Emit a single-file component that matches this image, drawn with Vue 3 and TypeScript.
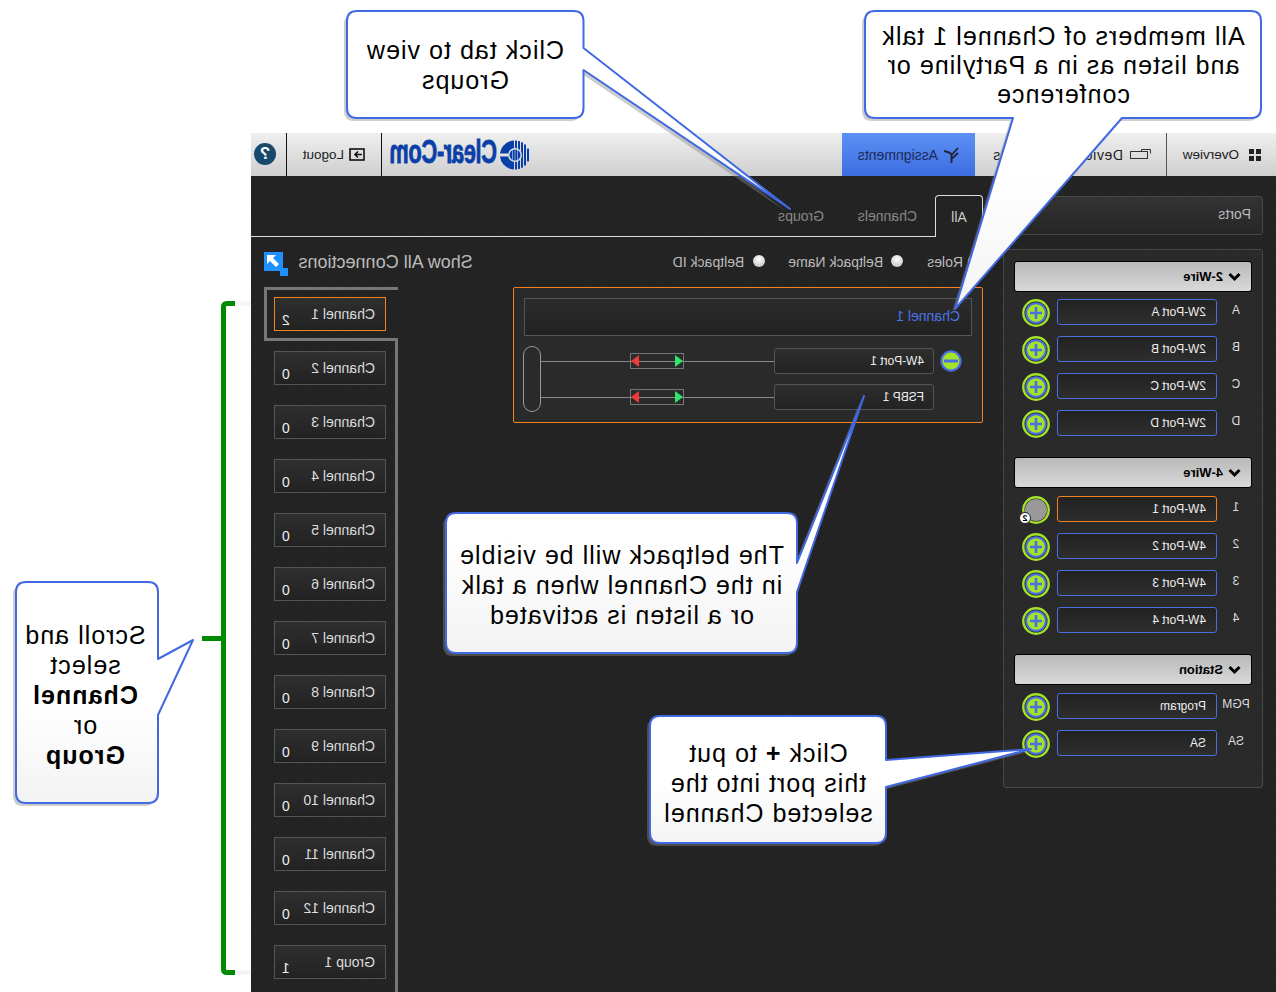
<script setup lang="ts">
interface Port { label: string; name: string; active?: boolean }
interface Group { title: string; ports: Port[] }
interface Seg { t: string; b?: boolean }
interface Callout { left: number; top: number; w: number; h: number; lines: Seg[][]; lh?: number }

const groups: Group[] = [
  { title: '2-Wire', ports: [
    { label: 'A', name: '2W-Port A' }, { label: 'B', name: '2W-Port B' },
    { label: 'C', name: '2W-Port C' }, { label: 'D', name: '2W-Port D' } ] },
  { title: '4-Wire', ports: [
    { label: '1', name: '4W-Port 1', active: true }, { label: '2', name: '4W-Port 2' },
    { label: '3', name: '4W-Port 3' }, { label: '4', name: '4W-Port 4' } ] },
  { title: 'Station', ports: [
    { label: 'PGM', name: 'Program' }, { label: 'SA', name: 'SA' } ] },
]

const channels = [
  ...Array.from({ length: 11 }, (_, i) => ({ name: `Channel ${i + 2}`, count: 0 })),
  { name: 'Group 1', count: 1 },
]

const stripes = [1, 4, 7, 10, 13, 16]
function half(s: number): number {
  return Math.sqrt(Math.max(0, 210 - (s + 1 - 15) * (s + 1 - 15)))
}

const callouts: Callout[] = [
  { left: 346, top: 11, w: 238, h: 107, lines: [[{ t: 'Click tab to view' }], [{ t: 'Groups' }]] },
  { left: 864, top: 12, w: 398, h: 107, lh: 29, lines: [[{ t: 'All members of Channel 1 talk' }], [{ t: 'and listen as in a Partyline or' }], [{ t: 'conference' }]] },
  { left: 446, top: 515, w: 351, h: 140, lines: [[{ t: 'The beltpack will be visible' }], [{ t: 'in the Channel when a talk' }], [{ t: 'or a listen is activated' }]] },
  { left: 650, top: 719, w: 236, h: 127, lines: [[{ t: 'Click ' }, { t: '+', b: true }, { t: ' to put' }], [{ t: 'this port into the' }], [{ t: 'selected Channel' }]] },
  { left: 14, top: 584, w: 142, h: 221, lines: [[{ t: 'Scroll and' }], [{ t: 'select' }], [{ t: 'Channel', b: true }], [{ t: 'or' }], [{ t: 'Group', b: true }]] },
]

function rr(x: number, y: number, w: number, h: number, r: number, tail: string, side: 'r' | 'b'): string {
  const x2 = x + w
  const y2 = y + h
  const right = side === 'r' ? tail : ''
  const bottom = side === 'b' ? tail : ''
  return `M${x + r} ${y}H${x2 - r}Q${x2} ${y} ${x2} ${y + r}${right}V${y2 - r}Q${x2} ${y2} ${x2 - r} ${y2}${bottom}H${x + r}Q${x} ${y2} ${x} ${y2 - r}V${y + r}Q${x} ${y} ${x + r} ${y}Z`
}

const shapes: string[] = [
  rr(347, 11, 236.5, 107, 10, 'V48L790 209L583.5 70', 'r'),
  rr(865, 11, 396, 107, 10, 'H1122L955 309L1013 118', 'b'),
  rr(446, 513, 351, 140, 10, 'V563L864 396L797 592', 'r'),
  rr(650, 716, 236, 127, 10, 'V760L1031 749L886 787', 'r'),
  rr(16, 582, 142, 221, 10, 'V659L193 640L158 715', 'r'),
]
</script>

<template>
  <div class="stage">
    <div class="mirror">
      <div class="app">
        <header class="topbar">
          <div class="nav nav-first">
            <svg class="i-grid" width="12" height="12" viewBox="0 0 12 12"><rect width="5" height="5" /><rect x="7" width="5" height="5" /><rect y="7" width="5" height="5" /><rect x="7" y="7" width="5" height="5" /></svg>
            <span>Overview</span>
          </div>
          <div class="nav nav-dev">
            <svg width="21" height="11" viewBox="0 0 21 11" fill="none" stroke="#333"><path d="M0.500 4.500V0.500H9.500V2.500" /><rect x="3.500" y="2.500" width="17" height="7" /></svg>
            <span>Device Capabilities</span>
          </div>
          <div class="nav nav-on">
            <svg width="15" height="16" viewBox="0 0 15 16" fill="none" stroke="#223" stroke-width="1.800"><path d="M7.500 16V7Q10 5 15 4M7 7.500L1 1M7 11.500L1 6" /></svg>
            <span>Assignments</span>
          </div>
          <div class="logo">
            <svg width="30" height="30" viewBox="0 0 30 30">
              <g fill="#0a3fa8">
                <rect v-for="s in stripes" :key="s" :x="s" :y="15 - half(s)" width="2" :height="2 * half(s)" />
                <path d="M18 0.700A14.500 14.500 0 0 1 18 29.300Z" />
              </g>
              <rect x="22" y="13.500" width="8" height="3" fill="#e2e2e2" />
              <circle cx="15" cy="15" r="7" fill="#e2e2e2" />
              <circle cx="15" cy="15" r="5.500" fill="#0a3fa8" />
              <path d="M12.500 10V20M15 9.500V20.500M17.500 10V20" stroke="#9db4e0" stroke-width="0.800" />
            </svg>
            <span class="logo-word"><span>Clear-Com</span></span>
          </div>
          <div class="logout">
            <svg width="16" height="13" viewBox="0 0 16 13" fill="none" stroke="#111" stroke-width="1.600"><rect x="1" y="1" width="14" height="11" /><path d="M3 6.500H10M7 3.500L10 6.500L7 9.500" /></svg>
            <span>Logout</span>
          </div>
          <div class="help"><span>?</span></div>
        </header>

        <div class="workspace">
          <aside class="ports">
            <div class="panel ports-head">Ports</div>
            <div class="panel ports-body">
              <section v-for="g in groups" :key="g.title" class="pgroup">
                <div class="pgroup-head">
                  <svg width="13" height="10" viewBox="0 0 13 10" fill="none" stroke="#000" stroke-width="3"><path d="M1.500 2L6.500 7L11.500 2" /></svg>
                  <span>{{ g.title }}</span>
                </div>
                <div v-for="p in g.ports" :key="p.label" class="prow">
                  <span class="plabel">{{ p.label }}</span>
                  <span class="pbox" :class="{ 'pbox-on': p.active }">{{ p.name }}</span>
                  <span class="padd">
                    <svg width="28" height="28" viewBox="0 0 28 28">
                      <circle cx="14" cy="14" r="12.700" fill="#222" stroke="#a5e22a" stroke-width="2.400" />
                      <template v-if="p.active">
                        <circle cx="14" cy="14" r="11" fill="#999" />
                      </template>
                      <template v-else>
                        <circle cx="14" cy="14" r="9.800" fill="#a5e22a" stroke="#4a6fe0" stroke-width="2" />
                        <path d="M14 8V20M8 14H20" stroke="#4a6fe0" stroke-width="2.600" />
                      </template>
                    </svg>
                    <span v-if="p.active" class="pbadge">2</span>
                  </span>
                </div>
              </section>
            </div>
          </aside>

          <main class="main">
            <div class="tabs">
              <div class="tab tab-on">All</div>
              <div class="tab tab-ch">Channels</div>
              <div class="tab tab-gr">Groups</div>
              <div class="tab-rule"></div>
            </div>

            <div class="options">
              <i class="radio radio-first"></i><span class="opt opt-roles">Roles</span>
              <i class="radio"></i><span class="opt opt-name">Beltpack Name</span>
              <i class="radio"></i><span class="opt opt-id">Beltpack ID</span>
              <span class="showall">Show All Connections</span>
              <span class="showicon">
                <svg width="24" height="24" viewBox="0 0 24 24">
                  <rect x="5" y="0" width="19" height="19" fill="#1e90ff" />
                  <rect x="0" y="16" width="8" height="8" fill="#1e90ff" />
                  <path d="M21 3H12L15 6L9 12L12 15L18 9L21 12Z" fill="#fff" />
                </svg>
              </span>
            </div>

            <div class="lower">
              <div class="chan">
                <div class="chan-head">Channel 1</div>
                <div class="conn">
                  <div class="conn-rows">
                    <div class="conn-row">
                      <span class="minus-slot">
                        <svg width="22" height="22" viewBox="0 0 22 22">
                          <circle cx="11" cy="11" r="9.600" fill="#a5e22a" stroke="#4a6fe0" stroke-width="2.200" />
                          <path d="M4 11H18" stroke="#4a6fe0" stroke-width="3" />
                        </svg>
                      </span>
                      <span class="cbox">4W-Port 1</span>
                      <span class="wire"><span class="arrows"><i class="tri-g"></i><i class="tri-r"></i></span></span>
                    </div>
                    <div class="conn-row">
                      <span class="minus-slot"></span>
                      <span class="cbox">FSBP 1</span>
                      <span class="wire"><span class="arrows"><i class="tri-g"></i><i class="tri-r"></i></span></span>
                    </div>
                  </div>
                  <div class="pill"></div>
                </div>
              </div>

              <div class="list">
                <div class="list-sel">
                  <div class="lbox lbox-on"><span class="lname">Channel 1</span><span class="lcount">2</span></div>
                </div>
                <div class="list-rest">
                  <div v-for="c in channels" :key="c.name" class="lbox"><span class="lname">{{ c.name }}</span><span class="lcount">{{ c.count }}</span></div>
                </div>
              </div>
            </div>
          </main>
        </div>
      </div>
    </div>

    <svg class="overlay" width="1276" height="992" viewBox="0 0 1276 992">
      <defs>
        <linearGradient id="cfill" x1="0" y1="0" x2="0" y2="1">
          <stop offset="0" stop-color="#fff" />
          <stop offset="0.55" stop-color="#fff" />
          <stop offset="1" stop-color="#f3f3f3" />
        </linearGradient>
      </defs>
      <path d="M235 303.500H251M235 972.500H251" fill="none" stroke="#f4f4f4" stroke-width="4" />
      <path d="M235 303.500H227Q223.500 303.500 223.500 307V969Q223.500 972.500 227 972.500H235M202 638.500H223" fill="none" stroke="#008a00" stroke-width="5" />
      <path v-for="(d, i) in shapes" :key="i" :d="d" fill="#888" opacity="0.42" transform="translate(-3 3)" />
      <path v-for="(d, i) in shapes" :key="'s' + i" :d="d" fill="url(#cfill)" stroke="#4169e1" stroke-width="2" stroke-linejoin="round" />
    </svg>

    <div
      v-for="(c, i) in callouts"
      :key="i"
      class="ctext"
      :style="{ left: c.left + 'px', top: c.top + 'px', width: c.w + 'px', height: c.h + 'px', lineHeight: (c.lh || 30) + 'px' }"
    >
      <div v-for="(line, j) in c.lines" :key="j" class="cline"><template v-for="(s, k) in line" :key="k"><b v-if="s.b">{{ s.t }}</b><template v-else>{{ s.t }}</template></template></div>
    </div>
  </div>
</template>

<style scoped>
.stage {
  position: relative;
  width: 1276px;
  height: 992px;
  overflow: hidden;
  background: #fff;
  font-family: "Liberation Sans", Arial, sans-serif;
}
.mirror {
  width: 1276px;
  height: 992px;
  transform: scaleX(-1);
  padding-top: 133px;
  box-sizing: border-box;
}
.app {
  width: 1025px;
  height: 859px;
  overflow: hidden;
  background-color: #222;
  background-image: repeating-linear-gradient(45deg, rgba(255,255,255,0.02) 0 1px, transparent 1px 3px);
}
.topbar {
  height: 43px;
  display: flex;
  align-items: stretch;
  background: linear-gradient(#efefef, #cfcfcf);
  color: #222;
  font-size: 13.500px;
}
.nav {
  display: flex;
  align-items: center;
  gap: 10px;
  box-sizing: border-box;
  border-right: 1px solid #555;
}
.nav-first { width: 110px; padding-left: 15px; }
.i-grid { fill: #222; }
.nav-dev {
  width: 191px;
  padding-left: 15px;
  gap: 7px;
  border-right: 0;
  font-size: 14px;
  letter-spacing: 0.6px;
  white-space: nowrap;
}
.nav-on {
  width: 133px;
  padding-left: 16px;
  gap: 6px;
  background: linear-gradient(#5c90f3, #3c6de2);
  border: 0;
  color: #1c2a55;
  font-size: 14px;
}
.logo {
  width: 461px;
  padding-left: 312px;
  box-sizing: border-box;
  display: flex;
  align-items: center;
  gap: 3px;
  border-right: 1px solid #111;
}
.logo-word { width: 108px; display: block; white-space: nowrap; line-height: 30px; margin-top: 2px; }
.logo-word span {
  display: inline-block;
  font-size: 33px;
  font-weight: 700;
  color: #0a3fa8;
  -webkit-text-stroke: 0.8px #0a3fa8;
  transform: scaleX(0.66);
  transform-origin: 0 50%;
  letter-spacing: -0.5px;
}
.logout {
  width: 95px;
  padding-left: 16px;
  box-sizing: border-box;
  display: flex;
  align-items: center;
  gap: 5px;
  border-right: 1px solid #111;
  font-size: 13.500px;
}
.help {
  width: 22px;
  height: 22px;
  margin: 10px 0 0 10px;
  border-radius: 50%;
  background: #17496d;
  color: #fff;
  font-size: 17px;
  font-weight: 700;
  text-align: center;
  line-height: 22px;
}
.workspace { display: flex; align-items: flex-start; }
.ports { width: 260px; margin: 20px 20px 0 13px; flex: none; }
.panel {
  box-sizing: border-box;
  border: 1px solid #484848;
  border-radius: 3px;
}
.ports-head {
  height: 39px;
  padding: 9px 11px;
  font-size: 14px;
  color: #bbb;
  background: linear-gradient(#333, #262626);
}
.ports-body {
  height: 539px;
  margin-top: 14px;
  padding: 11px 10px;
  background: #2a2a2a;
}
.pgroup { margin-bottom: 21px; }
.pgroup-head {
  height: 31px;
  box-sizing: border-box;
  display: flex;
  align-items: center;
  gap: 5px;
  padding-left: 10px;
  border: 1px solid #000;
  border-radius: 3px;
  background: linear-gradient(#b9b9b9, #d9d9d9);
  color: #000;
  font-size: 13px;
  font-weight: 700;
}
.prow {
  display: flex;
  align-items: center;
  height: 26px;
  margin-top: 11px;
  position: relative;
}
.pgroup-head + .prow { margin-top: 8px; }
.pgroup:first-child .pgroup-head + .prow { margin-top: 7px; }
.plabel {
  width: 35px;
  padding-right: 3px;
  box-sizing: border-box;
  flex: none;
  text-align: center;
  font-size: 12px;
  color: #ddd;
  margin-top: -4px;
  white-space: nowrap;
}
.pbox {
  width: 160px;
  height: 26px;
  flex: none;
  box-sizing: border-box;
  border: 1px solid #4a6fe0;
  border-radius: 3px;
  padding-left: 10px;
  font-size: 12px;
  line-height: 24px;
  color: #eee;
  background: linear-gradient(#222, #2e2e2e);
}
.pbox-on { border-color: #f58220; }
.padd {
  position: relative;
  margin: 2px 0 0 7px;
  width: 28px;
  height: 28px;
  flex: none;
}
.pbadge {
  position: absolute;
  right: -3px;
  bottom: 0;
  width: 12px;
  height: 12px;
  border-radius: 50%;
  background: #fff;
  border: 1px solid #222;
  box-sizing: border-box;
  color: #000;
  font-size: 9px;
  font-weight: 700;
  line-height: 10px;
  text-align: center;
}
.main { width: 732px; flex: none; }
.tabs {
  height: 42px;
  margin-top: 19px;
  display: flex;
  align-items: stretch;
  font-size: 14px;
  color: #888;
}
.tab { box-sizing: border-box; padding-top: 13px; }
.tab-on {
  width: 48px;
  border: 1px solid #ddd;
  border-bottom: 0;
  border-radius: 4px 4px 0 0;
  color: #ccc;
  text-align: center;
}
.tab-ch { width: 111px; padding-left: 18px; border-bottom: 1px solid #ddd; }
.tab-gr { width: 80px; white-space: nowrap; border-bottom: 1px solid #ddd; }
.tab-rule { flex: 1; border-bottom: 1px solid #ddd; }
.options {
  height: 50px;
  display: flex;
  align-items: center;
  font-size: 14px;
  color: #bbb;
}
.radio {
  width: 12px;
  height: 12px;
  border-radius: 50%;
  background: radial-gradient(circle at 50% 35%, #fff, #bbb);
  flex: none;
  margin-top: -3px;
}
.radio-first { margin-left: 3px; }
.opt { white-space: nowrap; }
.opt-roles { margin-left: 5px; margin-right: 24px; }
.opt-name { margin-left: 8px; margin-right: 23px; }
.opt-id { margin-left: 9px; }
.showall { margin-left: 200px; font-size: 18px; white-space: nowrap; }
.showicon { margin-left: 11px; margin-top: 3px; line-height: 0; }
.lower { display: flex; align-items: flex-start; }
.chan {
  width: 470px;
  height: 136px;
  flex: none;
  box-sizing: border-box;
  border: 1px solid #f58220;
  border-radius: 2px;
  padding: 10px;
  background: #2a2a2a;
}
.chan-head {
  height: 38px;
  box-sizing: border-box;
  border: 1px solid #555;
  padding: 9px 0 0 11px;
  font-size: 14px;
  color: #4a74e6;
  background: linear-gradient(#2b2b2b, #222);
}
.conn { display: flex; align-items: center; margin-top: 10px; height: 66px; }
.conn-rows { width: 431px; display: flex; flex-direction: column; gap: 10px; flex: none; }
.conn-row { display: flex; align-items: center; height: 26px; }
.minus-slot { width: 38px; height: 22px; padding-left: 10px; box-sizing: border-box; flex: none; line-height: 0; }
.cbox {
  width: 160px;
  height: 26px;
  flex: none;
  box-sizing: border-box;
  border: 1px solid #555;
  border-radius: 3px;
  padding-left: 9px;
  font-size: 12px;
  line-height: 24px;
  color: #eee;
  background: linear-gradient(#2e2e2e, #232323);
}
.wire {
  flex: 1;
  height: 1px;
  background: #8a8a8a;
  display: flex;
  justify-content: center;
  align-items: center;
}
.arrows {
  width: 54px;
  height: 16px;
  box-sizing: border-box;
  border: 1px solid #777;
  display: flex;
  align-items: center;
  justify-content: space-between;
  flex: none;
}
.tri-g, .tri-r { width: 0; height: 0; border-top: 6px solid transparent; border-bottom: 6px solid transparent; }
.tri-g { border-left: 8px solid #2ee66b; transform: scaleX(-1); }
.tri-r { border-left: 8px solid #f03a3a; }
.pill {
  width: 18px;
  height: 66px;
  flex: none;
  box-sizing: border-box;
  border: 1px solid #999;
  border-radius: 9px;
}
.list { width: 134px; margin-left: 115px; flex: none; }
.list-sel {
  height: 54px;
  box-sizing: border-box;
  border: 3px solid #777;
  border-left: 0;
  padding: 7px 10px 0 12px;
}
.list-rest {
  border-left: 3px solid #777;
  padding: 10px 10px 0 9px;
  display: flex;
  flex-direction: column;
  gap: 20px;
  height: 700px;
}
.lbox {
  width: 112px;
  height: 34px;
  flex: none;
  box-sizing: border-box;
  border: 1px solid #555;
  display: flex;
  justify-content: space-between;
  padding: 8px 7px 0 10px;
  font-size: 14px;
  color: #ddd;
  background: linear-gradient(#2f2f2f, #222);
}
.lbox-on { border-color: #f58220; }
.lcount { font-size: 14px; margin-top: 6px; color: #eee; }
.overlay { position: absolute; left: 0; top: 0; pointer-events: none; }
.ctext {
  position: absolute;
  display: flex;
  flex-direction: column;
  justify-content: center;
  align-items: center;
  transform: scaleX(-1);
  color: #000;
  font-size: 25px;
  letter-spacing: 1.03px;
  white-space: pre;
}
.cline { text-align: center; }
</style>
